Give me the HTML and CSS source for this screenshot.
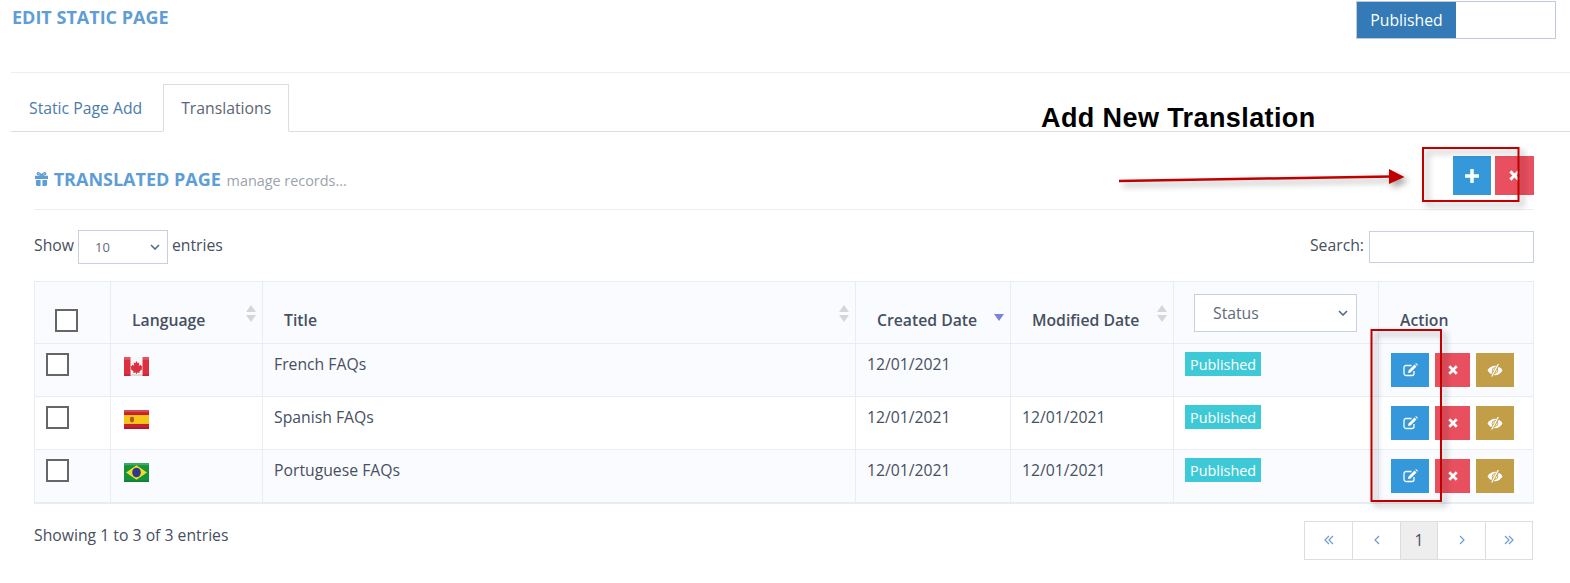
FILE: index.html
```html
<!DOCTYPE html>
<html lang="en">
<head>
<meta charset="utf-8">
<title>Edit Static Page</title>
<link rel="stylesheet" href="styles.css">
</head>
<body>
<div class="page">
  <header class="page-head">
    <h1 class="page-title">EDIT STATIC PAGE</h1>
    <div class="toggle"><span class="toggle-on">Published</span><span class="toggle-off"></span></div>
  </header>
  <nav class="tabs">
    <a class="tab">Static Page Add</a>
    <a class="tab tab-active">Translations</a>
  </nav>
  <section class="panel">
    <div class="panel-head">
      <h2 class="panel-title">
        <svg class="gift" viewBox="0 0 16 15"><path d="M1 4h14v3.500H1zM2 8.500h5V15H3.500A1.500 1.500 0 0 1 2 13.500zM9 8.500h5v5a1.500 1.500 0 0 1-1.500 1.500H9zM7 4h2v3.500H7z" fill="currentColor"/><path d="M8 3.500C6.500 .5 3.500 0 3.500 2c0 1.500 2.500 1.500 4.500 1.500zM8 3.500C9.500 .5 12.500 0 12.500 2c0 1.500-2.500 1.500-4.500 1.500z" fill="none" stroke="currentColor" stroke-width="1.500"/></svg>
        TRANSLATED PAGE <small class="panel-sub">manage records...</small>
      </h2>
      <div class="panel-actions">
        <button class="btn btn-blue btn-lg"><svg class="ico-plus" viewBox="0 0 12 12"><path d="M4.500 0h3v4.500H12v3H7.500V12h-3V7.500H0v-3h4.500z" fill="currentColor"/></svg></button>
        <button class="btn btn-red btn-lg"><svg class="ico-x" viewBox="0 0 10 10"><path d="M2.200.3 5 3.100 7.800.3 9.700 2.200 6.900 5l2.800 2.800-1.900 1.900L5 6.900 2.200 9.700.3 7.800 3.100 5 .3 2.200z" fill="currentColor"/></svg></button>
      </div>
    </div>
    <div class="controls">
      <label class="length">Show
        <select class="select select-sm"><option>10</option></select>
        entries</label>
      <label class="search">Search: <input class="search-input" type="text"></label>
    </div>
    <table class="table">
      <colgroup>
        <col class="c1"><col class="c2"><col class="c3"><col class="c4"><col class="c5"><col class="c6"><col class="c7">
      </colgroup>
      <thead>
        <tr>
          <th class="th-check"><span class="check"></span></th>
          <th>Language<svg class="sort" viewBox="0 0 10 17"><path d="M5 0l5 7H0zM5 17l5-7H0z" fill="#d4d6d9"/></svg></th>
          <th>Title<svg class="sort" viewBox="0 0 10 17"><path d="M5 0l5 7H0zM5 17l5-7H0z" fill="#d4d6d9"/></svg></th>
          <th>Created Date<svg class="sort" viewBox="0 0 10 17"><path d="M5 16l5-7H0z" fill="#7a83d6"/></svg></th>
          <th>Modified Date<svg class="sort" viewBox="0 0 10 17"><path d="M5 0l5 7H0zM5 17l5-7H0z" fill="#d4d6d9"/></svg></th>
          <th class="th-status"><select class="select select-status"><option>Status</option></select></th>
          <th>Action</th>
        </tr>
      </thead>
      <tbody>
        <tr class="odd">
          <td><span class="check"></span></td>
          <td><svg class="flag" viewBox="0 1 25 17" preserveAspectRatio="none"><rect y="1" width="25" height="17" fill="#f6f6f6"/><path d="M0 1h6.500v17H0zM18.500 1H25v17h-6.500z" fill="#dc2f3f"/><path d="M12.500 4.500l1.200 2 1.600-.6-.5 3 1.800-1 .7 1.300 1.200-.2-.8 2.300.7.500-3 2.200.3 1.300-2.700-.4V16h-1v-1.100l-2.700.4.300-1.300-3-2.200.7-.5-.8-2.300 1.200.2.700-1.300 1.800 1-.5-3 1.600.6z" fill="#dc2f3f"/><rect y="1" width="25" height="2.500" fill="#fff" opacity=".18"/><rect y="16.500" width="25" height="1.500" fill="#000" opacity=".12"/></svg></td>
          <td>French FAQs</td>
          <td>12/01/2021</td>
          <td></td>
          <td><span class="badge">Published</span></td>
          <td class="td-actions"><span class="actions"><button class="btn btn-blue"><svg class="ico-edit" viewBox="0 0 15 14"><use href="#i-edit"/></svg></button><button class="btn btn-red btn-narrow"><svg class="ico-x" viewBox="0 0 10 10"><use href="#i-x"/></svg></button><button class="btn btn-gold"><svg class="ico-eye" viewBox="0 0 16 13"><use href="#i-eye"/></svg></button></span></td>
        </tr>
        <tr>
          <td><span class="check"></span></td>
          <td><svg class="flag" viewBox="0 1 25 17" preserveAspectRatio="none"><rect y="1" width="25" height="17" fill="#c8202f"/><rect y="5.500" width="25" height="8" fill="#f5c518"/><rect x="6" y="7" width="4" height="5" rx="1.500" fill="#b5562a"/><rect y="1" width="25" height="2" fill="#fff" opacity=".2"/><rect y="16.500" width="25" height="1.500" fill="#000" opacity=".12"/></svg></td>
          <td>Spanish FAQs</td>
          <td>12/01/2021</td>
          <td>12/01/2021</td>
          <td><span class="badge">Published</span></td>
          <td class="td-actions"><span class="actions"><button class="btn btn-blue"><svg class="ico-edit" viewBox="0 0 15 14"><use href="#i-edit"/></svg></button><button class="btn btn-red btn-narrow"><svg class="ico-x" viewBox="0 0 10 10"><use href="#i-x"/></svg></button><button class="btn btn-gold"><svg class="ico-eye" viewBox="0 0 16 13"><use href="#i-eye"/></svg></button></span></td>
        </tr>
        <tr class="odd">
          <td><span class="check"></span></td>
          <td><svg class="flag" viewBox="0 1 25 17" preserveAspectRatio="none"><rect y="1" width="25" height="17" fill="#14923c"/><path d="M12.500 3 23 9.500 12.500 16 2 9.500z" fill="#f3d92a"/><circle cx="12.500" cy="9.500" r="4.300" fill="#2b3a8c"/><rect y="1" width="25" height="2" fill="#fff" opacity=".2"/><rect y="16.500" width="25" height="1.500" fill="#000" opacity=".12"/></svg></td>
          <td>Portuguese FAQs</td>
          <td>12/01/2021</td>
          <td>12/01/2021</td>
          <td><span class="badge">Published</span></td>
          <td class="td-actions"><span class="actions"><button class="btn btn-blue"><svg class="ico-edit" viewBox="0 0 15 14"><use href="#i-edit"/></svg></button><button class="btn btn-red btn-narrow"><svg class="ico-x" viewBox="0 0 10 10"><use href="#i-x"/></svg></button><button class="btn btn-gold"><svg class="ico-eye" viewBox="0 0 16 13"><use href="#i-eye"/></svg></button></span></td>
        </tr>
      </tbody>
    </table>
    <div class="table-foot">
      <span class="foot-info">Showing 1 to 3 of 3 entries</span>
      <div class="pager">
        <a class="pg"><svg class="chev" viewBox="0 0 10 10"><path d="M5 1 1 5l4 4M9 1 5 5l4 4" /></svg></a>
        <a class="pg"><svg class="chev" viewBox="0 0 10 10"><path d="M7 1 3 5l4 4" /></svg></a>
        <a class="pg pg-cur">1</a>
        <a class="pg"><svg class="chev" viewBox="0 0 10 10"><path d="M3 1l4 4-4 4" /></svg></a>
        <a class="pg"><svg class="chev" viewBox="0 0 10 10"><path d="M1 1l4 4-4 4M5 1l4 4-4 4" /></svg></a>
      </div>
    </div>
  </section>
</div>

<svg class="defs" width="0" height="0">
  <defs>
    <path id="i-x" d="M2.200.3 5 3.100 7.800.3 9.700 2.200 6.900 5l2.800 2.800-1.900 1.900L5 6.900 2.200 9.700.3 7.800 3.100 5 .3 2.200z" fill="currentColor"/>
    <g id="i-edit">
      <path d="M11 8v2.500A2 2 0 0 1 9 12.500H3A2 2 0 0 1 1 10.500V4.500A2 2 0 0 1 3 2.500H8.500" fill="none" stroke="currentColor" stroke-width="1.300"/>
      <path d="M11.500 1.500 13.500 3.500 7.500 9.500 5 10 5.500 7.500zM12.300.7 13 0 15 2 14.300 2.700z" fill="currentColor"/>
    </g>
    <g id="i-eye">
      <path d="M.5 6.500C2.500 3.300 5 1.800 8 1.800s5.500 1.500 7.500 4.700C13.500 9.700 11 11.200 8 11.200S2.500 9.700.5 6.500z" fill="currentColor"/>
      <circle cx="8" cy="6.500" r="2.800" fill="none" stroke="#c39e48" stroke-width=".9"/>
      <path d="M11.500.5 4.500 12.500" stroke="#c39e48" stroke-width="2.800"/>
      <path d="M11.300 0 4.700 12.500" stroke="currentColor" stroke-width="1.300"/>
    </g>
  </defs>
</svg>

<h3 class="note">Add New Translation</h3>
<svg class="markup" viewBox="0 0 1570 583" width="1570" height="583">
  <g class="markup-line">
    <path d="M1119 181 1391 176.500" fill="none" stroke="#c00000" stroke-width="2.500"/>
    <path d="M1389 169 1404.500 177 1389 184z" fill="#c00000"/>
  </g>
  <rect class="markup-box" x="1423" y="148" width="95.500" height="53" />
  <rect class="markup-box" x="1371.500" y="330" width="69.500" height="171" />
</svg>
```

FILE: styles.css
```css
* { box-sizing: border-box; }

html, body {
  margin: 0;
  height: 583px;
  overflow: hidden;
  background: #fff;
}

body {
  position: relative;
  font-family: "Open Sans", sans-serif;
  font-size: 15.750px;
  color: #46505f;
}

.page { padding: 1px 14px 0 11px; }

.page-head {
  display: flex;
  justify-content: space-between;
  align-items: flex-start;
  height: 71px;
  border-bottom: 1px solid #eeeeee;
  margin-right: -14px;
  padding-right: 14px;
  box-sizing: content-box;
}

.page-title {
  margin: 4px 0 0 1px;
  font-size: 18px;
  line-height: 24px;
  font-weight: 700;
  color: #5f9dd6;
}

.toggle {
  display: flex;
  width: 200px;
  height: 38px;
  border: 1px solid #bfc9da;
}

.toggle-on {
  width: 99px;
  background: #337ab7;
  color: #fff;
  text-align: center;
  line-height: 36px;
}

.toggle-off { flex: 1; background: #fff; }

.tabs {
  display: flex;
  height: 48px;
  margin: 11px -14px 0 0;
  border-bottom: 1px solid #dddddd;
}

.tab {
  height: 48px;
  padding: 0 18px;
  line-height: 49px;
  color: #4a7cab;
}

.tab-active {
  height: 48px;
  padding: 0 17px;
  border: 1px solid #dddddd;
  border-bottom-color: #fff;
  background: #fff;
  color: #5a6675;
  line-height: 47px;
  margin-left: 3px;
}

.panel { margin: 0 22px 0 23px; }

.panel-head {
  display: flex;
  justify-content: space-between;
  height: 78px;
  border-bottom: 1px solid #eeeeee;
}

.panel-title {
  margin: 36px 0 0;
  font-size: 18px;
  line-height: 22px;
  font-weight: 700;
  color: #5f9dd6;
}

.gift {
  width: 15px;
  height: 14px;
  vertical-align: 0;
}

.panel-sub {
  font-size: 14.400px;
  font-weight: 400;
  color: #9aa3ad;
  margin-left: 1px;
}

.panel-actions {
  display: flex;
  gap: 4px;
  padding-top: 24px;
}

.btn {
  display: inline-flex;
  align-items: center;
  justify-content: center;
  width: 38px;
  height: 34px;
  padding: 0;
  border: 0;
  color: #fff;
}

.btn-lg { height: 39px; }
.btn-lg.btn-red { width: 39px; }
.btn-blue { background: #3498db; }
.btn-red { background: #e9505f; }
.btn-gold { background: #c39e48; }
.btn-narrow { width: 35px; }

.ico-plus { width: 14px; height: 14px; }
.ico-x { width: 10px; height: 10px; }
.btn-lg .ico-x { width: 11px; height: 11px; }
.ico-edit { width: 15px; height: 14px; }
.ico-eye { width: 16px; height: 13px; }

.controls {
  display: flex;
  justify-content: space-between;
  align-items: flex-start;
  height: 34px;
  margin: 20px 0 17px;
  line-height: 30px;
}

.length, .search {
  display: flex;
  align-items: flex-start;
  gap: 4px;
}

.select {
  appearance: none;
  font-family: "Open Sans", sans-serif;
  border: 1px solid #c7d0df;
  background: #fff url("data:image/svg+xml,%3Csvg xmlns='http://www.w3.org/2000/svg' viewBox='0 0 10 6'%3E%3Cpath d='M1 1l4 4 4-4' fill='none' stroke='%23526a8c' stroke-width='1.600'/%3E%3C/svg%3E") no-repeat right 7px center / 10px 6px;
  color: #5f6b7a;
}

.select-sm {
  width: 90px;
  height: 34px;
  padding: 0 0 0 16px;
  font-size: 13px;
}

.search-input {
  width: 165px;
  height: 32px;
  border: 1px solid #c7d0df;
  background: #fff;
  margin: 1px 0 0 1px;
}

.table {
  width: 1499px;
  table-layout: fixed;
  border-collapse: collapse;
  border: 1px solid #e8edf3;
  border-bottom-width: 2px;
  margin-bottom: 0;
}

.c1 { width: 76px; }
.c2 { width: 152px; }
.c3 { width: 593px; }
.c4 { width: 155px; }
.c5 { width: 163px; }
.c6 { width: 205px; }
.c7 { width: 155px; }

.table th, .table td {
  border: 1px solid #e8edf3;
  text-align: left;
}

.table th {
  position: relative;
  height: 62px;
  padding: 0 21px 12px;
  vertical-align: bottom;
  font-size: 15.750px;
  font-weight: 600;
  color: #46505f;
  line-height: 22px;
  background: #fafbfe;
  white-space: nowrap;
}

.table td {
  height: 53px;
  padding: 9px 11px;
  vertical-align: top;
  line-height: 22px;
}

.odd td { background: #fafbfe; }

.table .th-check { padding: 0 0 11px 20px; }
.table .th-status { padding: 0 20px 11px; }
.select-status {
  display: block;
  width: 163px;
  height: 38px;
  padding-left: 18px;
  font-size: 15.750px;
  font-weight: 400;
  background-position: right 8px center;
}

.sort {
  position: absolute;
  top: 23px;
  right: 6px;
  width: 10px;
  height: 17px;
}

.check {
  display: block;
  width: 23px;
  height: 23px;
  border: 2px solid #666;
  background: #fff;
}

.flag {
  display: block;
  width: 25px;
  height: 19px;
  margin: 4px 0 0 2px;
}

.badge {
  display: inline-block;
  height: 24px;
  margin-top: -1px;
  padding: 0 5px;
  font-size: 14.400px;
  line-height: 25px;
  background: #3ec9d6;
  color: #fff;
  vertical-align: top;
}

.table .td-actions { padding: 9px 0 0 12px; }

.actions {
  display: inline-flex;
  gap: 6px;
  padding-right: 5px;
  background: #fff;
}

.table-foot {
  display: flex;
  justify-content: space-between;
  align-items: flex-start;
  margin-top: 17px;
}

.foot-info { margin-top: 3px; line-height: 22px; }

.pager {
  display: flex;
  width: 229px;
  height: 39px;
  border: 1px solid #dddddd;
  margin-right: 1px;
}

.pg {
  display: flex;
  align-items: center;
  justify-content: center;
  width: 48px;
  border-right: 1px solid #dddddd;
}

.pg:last-child { border-right: 0; flex: 1; }

.pg-cur {
  width: 37px;
  background: #eeeeee;
  color: #46505f;
}

.chev {
  width: 10px;
  height: 10px;
  fill: none;
  stroke: #6f9bcf;
  stroke-width: 1.200;
}

.defs { position: absolute; }

.note {
  position: absolute;
  left: 1041px;
  top: 102px;
  margin: 0;
  font-family: "Liberation Sans", sans-serif;
  font-size: 27px;
  letter-spacing: .4px;
  line-height: 33px;
  font-weight: 700;
  color: #000;
}

.markup {
  position: absolute;
  left: 0;
  top: 0;
  pointer-events: none;
}

.markup-line, .markup-box {
  filter: drop-shadow(4px 4px 3px rgba(0, 0, 0, .36));
}

.markup-box {
  fill: none;
  stroke: #c00000;
  stroke-width: 2;
}
```
